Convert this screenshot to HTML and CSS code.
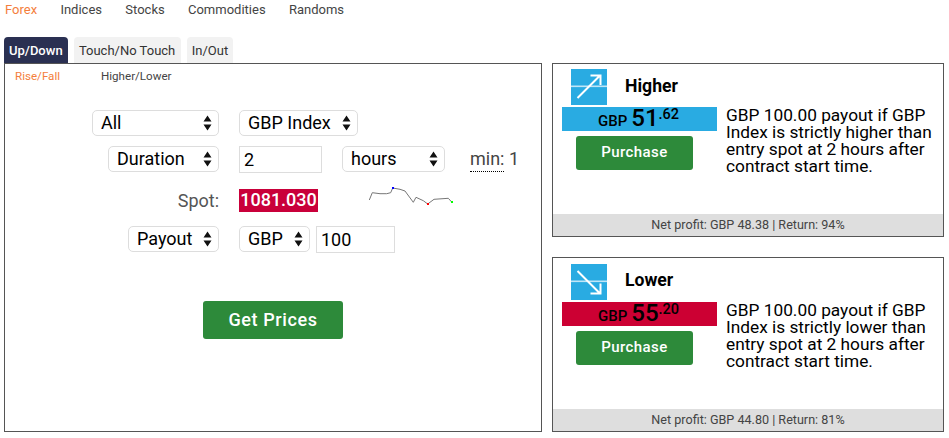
FILE: index.html
```html
<!DOCTYPE html>
<html lang="en">
<head>
<meta charset="utf-8">
<title>Trading</title>
<link rel="stylesheet" href="styles.css">
</head>
<body>
<nav class="market-nav">
  <a class="market active">Forex</a>
  <a class="market">Indices</a>
  <a class="market">Stocks</a>
  <a class="market">Commodities</a>
  <a class="market">Randoms</a>
</nav>
<div class="layout">
  <section class="left">
    <div class="tabs">
      <a class="tab selected">Up/Down</a>
      <a class="tab">Touch/No Touch</a>
      <a class="tab">In/Out</a>
    </div>
    <div class="form-panel">
      <div class="subtabs">
        <a class="subtab active">Rise/Fall</a>
        <a class="subtab">Higher/Lower</a>
      </div>
      <div class="form">
        <div class="row row-market">
          <div class="col-left"><select class="sel w-all"><option>All</option></select></div>
          <div class="col-right"><select class="sel w-index"><option>GBP Index</option></select></div>
        </div>
        <div class="row">
          <div class="col-left"><select class="sel w-duration"><option>Duration</option></select></div>
          <div class="col-right">
            <input class="num w-dur-input" value="2">
            <select class="sel w-hours"><option>hours</option></select>
            <span class="min"><span class="min-label">min:</span> 1</span>
          </div>
        </div>
        <div class="row row-spot">
          <div class="col-left"><span class="spot-label">Spot:</span></div>
          <div class="col-right">
            <span class="spot-value">1081.030</span>
            <svg class="spark" width="90" height="26" viewBox="0 0 90 26">
              <polyline fill="none" stroke="#777" stroke-width="1" points="3.3,14 6.3,6.7 14,7.7 20.7,7.7 24.7,6.7 26.7,2 34,3.3 39,5 47.3,16.3 50,11.3 57.3,14.7 61.7,18 68,13.3 82.3,12.3 85.7,16"/>
              <rect x="26" y="1" width="2" height="2" fill="#00f"/>
              <rect x="61" y="17" width="2" height="2" fill="#f00"/>
              <rect x="85" y="15" width="2" height="2" fill="#0f0"/>
            </svg>
          </div>
        </div>
        <div class="row">
          <div class="col-left"><select class="sel w-payout"><option>Payout</option></select></div>
          <div class="col-right tight">
            <select class="sel w-cur"><option>GBP</option></select>
            <input class="num w-amount" value="100">
          </div>
        </div>
      </div>
      <div class="actions"><button class="get-prices">Get Prices</button></div>
    </div>
  </section>
  <aside class="right">
    <article class="card">
      <header class="card-head">
        <svg class="type-icon" width="36" height="36" viewBox="0 0 36 36">
          <rect width="36" height="36" fill="#29abe2"/>
          <rect y="16.500" width="36" height="1.600" fill="#bfe6f7"/>
          <path d="M6.500 29 L29 6.500 M19.500 6.500 H29.500 V16" fill="none" stroke="#fff" stroke-width="2"/>
        </svg>
        <h2 class="card-title">Higher</h2>
      </header>
      <div class="card-body">
        <div class="buy">
          <div class="price up"><span class="cur">GBP</span> <span class="whole">51</span><span class="frac">.62</span></div>
          <button class="purchase">Purchase</button>
        </div>
        <p class="desc">GBP 100.00 payout if GBP Index is strictly higher than entry spot at 2 hours after contract start time.</p>
      </div>
      <footer class="card-foot">Net profit: GBP 48.38 | Return: 94%</footer>
    </article>
    <article class="card">
      <header class="card-head">
        <svg class="type-icon" width="36" height="36" viewBox="0 0 36 36">
          <rect width="36" height="36" fill="#29abe2"/>
          <rect y="16.500" width="36" height="1.600" fill="#bfe6f7"/>
          <path d="M6.500 7 L29 29.500 M29.500 19.500 V29.500 H19.500" fill="none" stroke="#fff" stroke-width="2"/>
        </svg>
        <h2 class="card-title">Lower</h2>
      </header>
      <div class="card-body">
        <div class="buy">
          <div class="price down"><span class="cur">GBP</span> <span class="whole">55</span><span class="frac">.20</span></div>
          <button class="purchase">Purchase</button>
        </div>
        <p class="desc">GBP 100.00 payout if GBP Index is strictly lower than entry spot at 2 hours after contract start time.</p>
      </div>
      <footer class="card-foot">Net profit: GBP 44.80 | Return: 81%</footer>
    </article>
  </aside>
</div>
</body>
</html>
```
FILE: styles.css
```css
* { box-sizing: border-box; }
html, body { margin: 0; padding: 0; }
body {
  width: 949px;
  height: 438px;
  overflow: hidden;
  background: #fff;
  color: #000;
  font-family: Roboto, "Liberation Sans", sans-serif;
}
.market-nav {
  display: flex;
  height: 37px;
  padding: 1px 0 0 5px;
  font-size: 13px;
  line-height: 17px;
  color: #444;
}
.market { margin-right: 23.3px; }
.market.active { color: #f47e3c; }
.layout { display: flex; align-items: flex-start; padding-left: 4px; }
.left { width: 538px; }
.tabs { display: flex; gap: 6px; height: 26px; }
.tab {
  padding: 0 5.25px;
  font-size: 13px;
  line-height: 27px;
  background: #f2f2f2;
  color: #333;
  border-radius: 4px 4px 0 0;
}
.tab.selected { background: #2a3052; color: #fff; font-weight: 500; padding: 0 5px; }
.form-panel {
  height: 369px;
  border: 1px solid #555;
}
.subtabs {
  display: flex;
  height: 46px;
  padding: 5px 0 0 10px;
  font-size: 11.6px;
  line-height: 14px;
  color: #444;
}
.subtab { width: 86px; }
.subtab.active { color: #f47e3c; }
.form { display: flex; flex-direction: column; gap: 10px; }
.row { display: flex; gap: 20px; height: 26px; align-items: flex-start; }
.row-spot { margin-top: 7px; margin-bottom: 4px; height: 23px; align-items: center; }
.col-left { width: 214px; display: flex; justify-content: flex-end; }
.col-right { display: flex; align-items: flex-start; gap: 20px; }
.col-right.tight { gap: 6px; }
.row-spot .col-right { align-items: center; gap: 48px; }
.sel {
  display: block;
  height: 26px;
  margin: 0;
  padding: 0 0 2px 8px;
  appearance: none;
  -webkit-appearance: none;
  border: 1px solid #ddd;
  border-radius: 5px;
  color: #000;
  font-family: inherit;
  font-size: 18px;
  background-color: #fff;
  background-image: url("data:image/svg+xml,%3Csvg xmlns='http://www.w3.org/2000/svg' width='9' height='16'%3E%3Cpath d='M4.500 0.500L8.500 6.500H0.500ZM4.500 15.500L0.500 9.500H8.500Z' fill='%23111'/%3E%3C/svg%3E");
  background-repeat: no-repeat;
  background-position: right 6px center;
}
.w-all { width: 127px; }
.w-index { width: 119px; }
.w-duration { width: 111px; }
.w-hours { width: 103px; }
.w-payout { width: 91px; }
.w-cur { width: 71px; }
.num {
  display: block;
  height: 27px;
  margin: 0;
  padding: 0 4px 1px;
  border: 1px solid #ddd;
  color: #000;
  font-family: inherit;
  font-size: 18px;
  background: #fff;
  outline: none;
}
.w-dur-input { width: 83px; }
.w-amount { width: 79px; }
.min { margin-left: 5px; font-size: 18px; line-height: 26px; color: #444; white-space: nowrap; }
.min-label { display: inline-block; height: 26px; line-height: 26px; border-bottom: 1px dotted #000; }
.spot-label { font-size: 18px; line-height: 23px; color: #555; }
.spot-value {
  width: 79px;
  height: 23px;
  background: #c9003a;
  color: #fff;
  font-size: 18px;
  font-weight: 500;
  line-height: 22px;
  text-align: center;
  white-space: nowrap;
}
.spark { display: block; margin-top: -3px; }
.actions { display: flex; justify-content: flex-start; padding: 49px 0 0 198px; }
.get-prices {
  width: 140px;
  height: 38px;
  padding: 0 0 2px;
  border: 0;
  border-radius: 3px;
  background: #2d8a3a;
  color: #fff;
  font-family: inherit;
  font-size: 18px;
  font-weight: 500;
  letter-spacing: 0.6px;
}
.right {
  display: flex;
  flex-direction: column;
  gap: 20px;
  width: 392px;
  margin-left: 10px;
  margin-top: 26px;
}
.card {
  display: flex;
  flex-direction: column;
  height: 174px;
  border: 1px solid #555;
}
.card + .card { height: 175px; }
.card-head { display: flex; align-items: center; height: 36px; margin: 5px 0 2px; padding-left: 18px; }
.card + .card .card-head { margin-top: 6px; }
.card-title { margin: 0 0 2px 18px; font-size: 17.6px; font-weight: 700; line-height: 34px; }
.card + .card .card-title { margin-bottom: 4px; }
.type-icon { display: block; }
.card-body { display: flex; flex: 1; padding-left: 9px; }
.buy { width: 155px; display: flex; flex-direction: column; align-items: flex-start; }
.price {
  width: 155px;
  height: 24px;
  padding-left: 36px;
  line-height: 23px;
  font-weight: 700;
  white-space: nowrap;
}
.price.up { background: #29abe2; }
.price.down { background: #cc0033; }
.cur { font-size: 15px; font-weight: 500; }
.whole { font-size: 24px; font-weight: 500; }
.frac { font-size: 14.5px; font-weight: 500; position: relative; top: -7px; }
.purchase {
  width: 117px;
  height: 34px;
  margin: 5px 0 0 14px;
  padding: 0 0 3px;
  border: 0;
  border-radius: 3px;
  background: #2d8a3a;
  color: #fff;
  font-family: inherit;
  font-size: 15px;
  font-weight: 500;
  letter-spacing: 0.4px;
}
.desc { margin: 0 0 0 9px; width: 215px; font-size: 17.3px; line-height: 17px; padding-top: 0; }
.card-foot {
  height: 22px;
  background: #dedede;
  color: #444;
  font-size: 12.6px;
  line-height: 22px;
  text-align: center;
}
```
